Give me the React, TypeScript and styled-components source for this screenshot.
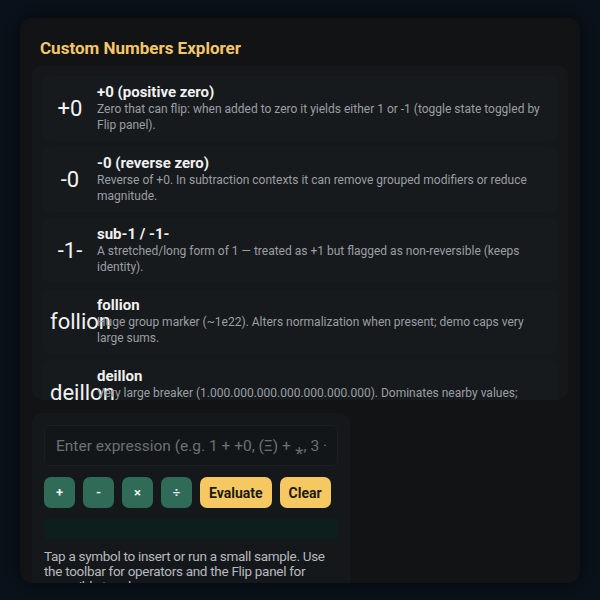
import styled, { createGlobalStyle } from 'styled-components';

const GlobalStyle = createGlobalStyle`
  * { box-sizing: border-box; }
  html, body {
    margin: 0;
    background: #0b121b;
    font-family: Roboto, "Liberation Sans", sans-serif;
  }
`;

const Page = styled.div`
  padding: 18px 20px 17px;
`;

const Panel = styled.div`
  height: 565px;
  background: #111315;
  border-radius: 12px;
  box-shadow: 0 0 28px rgba(0, 0, 0, 0.55);
  padding: 20px 12px;
  overflow: hidden;
  display: flex;
  flex-direction: column;
`;

const Title = styled.h1`
  margin: 0 0 8px;
  padding-left: 8px;
  font-size: 17px;
  line-height: 20px;
  font-weight: 700;
  color: #f3c767;
`;

const List = styled.div`
  height: 334px;
  flex-shrink: 0;
  background: #15181b;
  border-radius: 10px;
  padding: 10px;
  overflow: hidden;
  display: flex;
  flex-direction: column;
  gap: 6px;
`;

const Row = styled.div`
  display: flex;
  align-items: center;
  gap: 7px;
  padding: 8px;
  background: #171a1d;
  border-radius: 8px;
  flex-shrink: 0;
`;

const Symbol = styled.div`
  width: 40px;
  flex-shrink: 0;
  text-align: center;
  font-size: 22px;
  line-height: 26px;
  color: #f2f2f2;
  white-space: nowrap;
`;

const Info = styled.div`
  flex: 1;
  min-width: 0;
`;

const Name = styled.div`
  font-size: 15px;
  line-height: 17px;
  font-weight: 700;
  color: #f1f1f1;
`;

const Desc = styled.div`
  font-size: 12px;
  line-height: 16px;
  color: #9a9fa4;
`;

const Card = styled.div`
  width: 318px;
  margin-top: 13px;
  background: #15181b;
  border-radius: 10px;
  padding: 12px;
  display: flex;
  flex-direction: column;
`;

const Input = styled.input`
  height: 41px;
  width: 100%;
  background: #131619;
  border: 1px solid #1b1f22;
  border-radius: 6px;
  padding: 0 11px;
  font-family: Roboto, "Liberation Sans", sans-serif;
  font-size: 15.5px;
  color: #e6e6e6;
  outline: none;

  &::placeholder {
    color: #6b7075;
  }
`;

const Toolbar = styled.div`
  display: flex;
  gap: 8px;
  margin-top: 11px;
`;

const ToolButton = styled.button<{ $accent?: boolean }>`
  height: 31px;
  min-width: 31px;
  padding: 0 9px;
  border: none;
  border-radius: 7px;
  background: ${(p) => (p.$accent ? '#f5c861' : '#2f6b57')};
  color: ${(p) => (p.$accent ? '#1b1a16' : '#e9f3ef')};
  font-family: Roboto, "Liberation Sans", sans-serif;
  font-size: ${(p) => (p.$accent ? '14px' : '13px')};
  font-weight: 700;
  cursor: pointer;
`;

const Result = styled.div`
  height: 20px;
  margin-top: 11px;
  background: #0d1f1d;
  border-radius: 4px;
`;

const Help = styled.p`
  margin: 10px 0 0;
  font-size: 13.5px;
  line-height: 15px;
  letter-spacing: -0.3px;
  color: #b6babe;
`;

const numbers = [
  {
    sym: '+0',
    name: '+0 (positive zero)',
    desc: 'Zero that can flip: when added to zero it yields either 1 or -1 (toggle state toggled by Flip panel).',
  },
  {
    sym: '-0',
    name: '-0 (reverse zero)',
    desc: 'Reverse of +0. In subtraction contexts it can remove grouped modifiers or reduce magnitude.',
  },
  {
    sym: '-1-',
    name: 'sub-1 / -1-',
    desc: 'A stretched/long form of 1 — treated as +1 but flagged as non-reversible (keeps identity).',
  },
  {
    sym: 'follion',
    name: 'follion',
    desc: 'Huge group marker (~1e22). Alters normalization when present; demo caps very large sums.',
  },
  {
    sym: 'deillon',
    name: 'deillon',
    desc: 'Very large breaker (1.000.000.000.000.000.000.000). Dominates nearby values; demo treats it as a ceiling.',
  },
];

function App() {
  return (
    <>
      <GlobalStyle />
      <Page>
        <Panel>
          <Title>Custom Numbers Explorer</Title>
          <List>
            {numbers.map((n) => (
              <Row key={n.name}>
                <Symbol>{n.sym}</Symbol>
                <Info>
                  <Name>{n.name}</Name>
                  <Desc>{n.desc}</Desc>
                </Info>
              </Row>
            ))}
          </List>
          <Card>
            <Input placeholder="Enter expression (e.g. 1 + +0, (Ξ) + ⁎, 3 · 2)" />
            <Toolbar>
              <ToolButton>+</ToolButton>
              <ToolButton>-</ToolButton>
              <ToolButton>×</ToolButton>
              <ToolButton>÷</ToolButton>
              <ToolButton $accent>Evaluate</ToolButton>
              <ToolButton $accent>Clear</ToolButton>
            </Toolbar>
            <Result />
            <Help>
              Tap a symbol to insert or run a small sample. Use the toolbar for operators and the Flip panel for
              reversible toggles.
            </Help>
          </Card>
        </Panel>
      </Page>
    </>
  );
}

export default App;
